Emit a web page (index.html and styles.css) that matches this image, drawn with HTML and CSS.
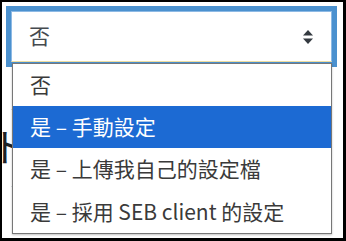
FILE: index.html
```html
<!DOCTYPE html>
<html lang="zh-Hant">
<head>
    <meta charset="UTF-8">
    <meta name="viewport" content="width=device-width, initial-scale=1.0">
    <title>SEB 設定</title>
    <link rel="stylesheet" href="styles.css">
</head>
<body>
    <div class="page">
        <div class="select-box">
            <span class="select-value">否</span>
            <svg class="select-arrows" width="10" height="14" viewBox="0 0 10 14">
                <path d="M5 0 L10 5.5 L0 5.5 Z" fill="#343a40"/>
                <path d="M0 8.5 L10 8.5 L5 14 Z" fill="#343a40"/>
            </svg>
        </div>

        <!-- content under the open list -->
        <div class="bg-row"></div>
        <div class="bg-row tall">
            <div class="bg-clip"><span class="bg-glyph">ト</span></div>
        </div>

        <ul class="option-list">
            <li class="option">否</li>
            <li class="option selected">是 – 手動設定</li>
            <li class="option">是 – 上傳我自己的設定檔</li>
            <li class="option last">是 – 採用 SEB client 的設定</li>
        </ul>
    </div>
</body>
</html>
```

FILE: styles.css
```css
html, body {
    margin: 0;
}
body {
    background-color: #000;
    padding: 2px 3px 3px 2px;
    height: 241px;
    box-sizing: border-box;
    font-family: "Noto Sans CJK TC", "Noto Sans", sans-serif;
}
.page {
    position: relative;
    background-color: #fff;
    height: 236px;
    overflow: hidden;
    padding: 9px 11px 0 9px;
    box-sizing: border-box;
}
.select-box {
    height: 51px;
    box-sizing: border-box;
    border: 1px solid #8db9e4;
    border-bottom-color: #eedd9f;
    box-shadow: 0 0 0 5px #4b91cf;
    display: flex;
    align-items: center;
    justify-content: space-between;
    padding: 0 18px 3px 17px;
    font-size: 21px;
    color: #454a4f;
}
.select-value {
    line-height: 1;
}
.select-arrows {
    display: block;
    margin-top: 3px;
}
.bg-row {
    height: 48px;
    box-sizing: border-box;
    border-bottom: 1px solid #dee2e6;
}
.bg-row.tall {
    height: 77px;
    padding-top: 16px;
}
.bg-clip {
    margin-left: -9px;
    width: 10px;
    overflow: hidden;
}
.bg-glyph {
    display: block;
    margin-left: -12px;
    font-size: 39px;
    line-height: 1;
    color: #1d2125;
}
.option-list {
    position: absolute;
    left: 10px;
    top: 61px;
    width: 320px;
    margin: 0;
    padding: 0;
    list-style: none;
    background-color: #fff;
    border: 1px solid #777;
    box-sizing: border-box;
    box-shadow: 0 1px 2px rgba(0, 0, 0, 0.25);
}
.option {
    height: 42px;
    box-sizing: border-box;
    display: flex;
    align-items: center;
    padding: 0 0 2px 17px;
    font-size: 21px;
    color: #3a3a3a;
    white-space: nowrap;
}
.option.last {
    height: 43px;
}
.option.selected {
    background-color: #1c6ad3;
    color: #fff;
}
```
